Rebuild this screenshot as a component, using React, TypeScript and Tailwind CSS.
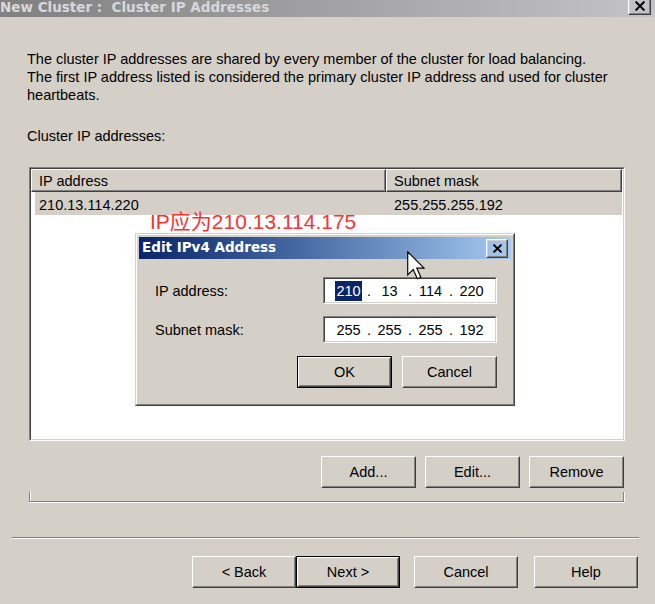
import React from "react";

const sans = "font-['Liberation_Sans',Arial,sans-serif]";
const bold = "font-['DejaVu_Sans',Verdana,sans-serif] font-bold";

function Face({ children }: { children: React.ReactNode }) {
  return (
    <div className="flex h-full w-full border border-t-white border-l-white border-r-[#404040] border-b-[#404040]">
      <div className="flex flex-1 items-center justify-center border border-t-[#d4d0c8] border-l-[#d4d0c8] border-r-[#808080] border-b-[#808080]">
        {children}
      </div>
    </div>
  );
}

function WinButton({ label, size, isDefault }: { label: string; size: string; isDefault?: boolean }) {
  if (isDefault) {
    return (
      <div className={`${size} border border-black`}>
        <Face>{label}</Face>
      </div>
    );
  }
  return (
    <div className={size}>
      <Face>{label}</Face>
    </div>
  );
}

function CloseGlyph({ w, h }: { w: number; h: number }) {
  return (
    <svg width={w} height={h} viewBox="0 0 10 9">
      <path d="M1 0.5 L9 8.5 M9 0.5 L1 8.5" stroke="#000" strokeWidth="1.8" fill="none" />
    </svg>
  );
}

function IpBox({ parts, selectFirst }: { parts: string[]; selectFirst?: boolean }) {
  return (
    <div className="h-[27px] w-[174px] border border-t-[#808080] border-l-[#808080] border-r-white border-b-white">
      <div className="flex h-full items-center border border-t-[#404040] border-l-[#404040] border-r-[#d4d0c8] border-b-[#d4d0c8] bg-white pl-[10px]">
        {parts.map((p, i) => (
          <React.Fragment key={i}>
            {i === 0 && selectFirst ? (
              <span className="flex h-[20px] w-[27px] items-center justify-center bg-[#0a246a] text-white">{p}</span>
            ) : (
              <span className="w-[27px] text-center">{p}</span>
            )}
            {i < 3 && <span className="w-[14px] text-center">.</span>}
          </React.Fragment>
        ))}
      </div>
    </div>
  );
}

function EditDialog() {
  return (
    <div className="absolute left-[135px] top-[233px] h-[173px] w-[380px] border border-t-[#d4d0c8] border-l-[#d4d0c8] border-r-[#404040] border-b-[#404040]">
      <div className="flex h-full flex-col border border-t-white border-l-white border-r-[#808080] border-b-[#808080] bg-[#d4d0c8] p-[2px]">
        <div className="flex h-[22px] items-center bg-linear-to-r from-[#0a246a] to-[#a6caf0] pl-[3px] pr-[3px]">
          <span className={`${bold} text-[13.5px] leading-none text-white`}>Edit IPv4 Address</span>
          <div className="ml-auto h-[19px] w-[22px]">
            <Face>
              <CloseGlyph w={11} h={9} />
            </Face>
          </div>
        </div>
        <div className="flex flex-col pl-[16px] pr-[14px] pt-[18px]">
          <div className="flex items-center">
            <span className="w-[168px]">IP address:</span>
            <IpBox parts={["210", "13", "114", "220"]} selectFirst />
          </div>
          <div className="mt-[12px] flex items-center">
            <span className="w-[168px]">Subnet mask:</span>
            <IpBox parts={["255", "255", "255", "192"]} />
          </div>
          <div className="mt-[13px] flex justify-end gap-[10px]">
            <WinButton label="OK" size="h-[32px] w-[95px]" isDefault />
            <WinButton label="Cancel" size="h-[32px] w-[95px]" />
          </div>
        </div>
      </div>
    </div>
  );
}

export default function App() {
  return (
    <div className={`relative h-[604px] w-[655px] overflow-hidden bg-[#d4d0c8] text-[14.5px] leading-[18px] text-black ${sans}`}>
      {/* inactive window caption, top clipped */}
      <div className="flex h-[17px] items-start overflow-hidden bg-linear-to-r from-[#808080] to-[#c4c4c8]">
        <span className={`${bold} whitespace-pre text-[13.5px] leading-[14px] text-[#d8d8dc]`}>
          New Cluster :  Cluster IP Addresses
        </span>
        <div className="-mt-[3px] ml-auto mr-[4px] h-[18px] w-[23px]">
          <Face>
            <CloseGlyph w={12} h={10} />
          </Face>
        </div>
      </div>

      <p className="ml-[27px] mt-[33px]">
        The cluster IP addresses are shared by every member of the cluster for load balancing.
        <br />
        The first IP address listed is considered the primary cluster IP address and used for cluster
        <br />
        heartbeats.
      </p>

      <p className="ml-[27px] mt-[23px]">Cluster IP addresses:</p>

      {/* list view */}
      <div className="ml-[29px] mt-[22px] h-[274px] w-[596px] border border-t-[#808080] border-l-[#808080] border-r-white border-b-white">
        <div className="flex h-full flex-col border border-t-[#404040] border-l-[#404040] border-r-[#d4d0c8] border-b-[#d4d0c8] bg-white">
          <div className="flex h-[23px] pr-[1px]">
            <div className="flex w-[355px] items-center border border-t-white border-l-white border-r-[#404040] border-b-[#404040] bg-[#d4d0c8] pl-[7px] shadow-[inset_-1px_-1px_0_#808080]">
              IP address
            </div>
            <div className="flex flex-1 items-center border border-t-white border-l-white border-r-[#404040] border-b-[#404040] bg-[#d4d0c8] pl-[7px] shadow-[inset_-1px_-1px_0_#808080]">
              Subnet mask
            </div>
          </div>
          <div className="ml-[4px] mr-[1px] flex h-[23px] items-center bg-[#d4d0c8] pt-[2px]">
            <span className="w-[351px] pl-[4px]">210.13.114.220</span>
            <span className="pl-[8px]">255.255.255.192</span>
          </div>
        </div>
      </div>

      <div className="mr-[31px] mt-[15px] flex justify-end gap-[9px]">
        <WinButton label="Add..." size="h-[32px] w-[95px]" />
        <WinButton label="Edit..." size="h-[32px] w-[95px]" />
        <WinButton label="Remove" size="h-[32px] w-[95px]" />
      </div>

      {/* bottom of the group frame */}
      <div className="ml-[29px] mt-[4px] h-[10px] w-[595px] border-x border-b border-[#808080] shadow-[0_1px_0_#ffffff,1px_0_0_#ffffff,inset_1px_0_0_#ffffff]" />

      <div className="ml-[12px] mt-[35px] w-[627px] border-t border-b border-t-[#808080] border-b-white" />

      <div className="mr-[17px] mt-[17px] flex justify-end">
        <WinButton label="< Back" size="h-[32px] w-[104px]" />
        <WinButton label="Next >" size="h-[32px] w-[104px]" isDefault />
        <div className="ml-[14px]">
          <WinButton label="Cancel" size="h-[32px] w-[104px]" />
        </div>
        <div className="ml-[16px]">
          <WinButton label="Help" size="h-[32px] w-[104px]" />
        </div>
      </div>

      {/* annotation over the list */}
      <span className="absolute left-[150px] top-[211px] whitespace-nowrap font-['Liberation_Sans','Noto_Sans_CJK_SC',sans-serif] text-[21px] leading-[21px] text-[#ff3030]">
        IP应为210.13.114.175
      </span>

      <EditDialog />

      {/* mouse pointer */}
      <svg className="absolute left-[407px] top-[251px]" width="18" height="29" viewBox="0 0 12.5 20">
        <path
          d="M0.5 0.5 L0.5 16.5 L4.3 12.8 L7.2 19.2 L9.6 18.1 L6.8 11.8 L11.8 11.8 Z"
          fill="#ffffff"
          stroke="#000000"
          strokeWidth="0.8"
          strokeLinejoin="miter"
        />
      </svg>
    </div>
  );
}
